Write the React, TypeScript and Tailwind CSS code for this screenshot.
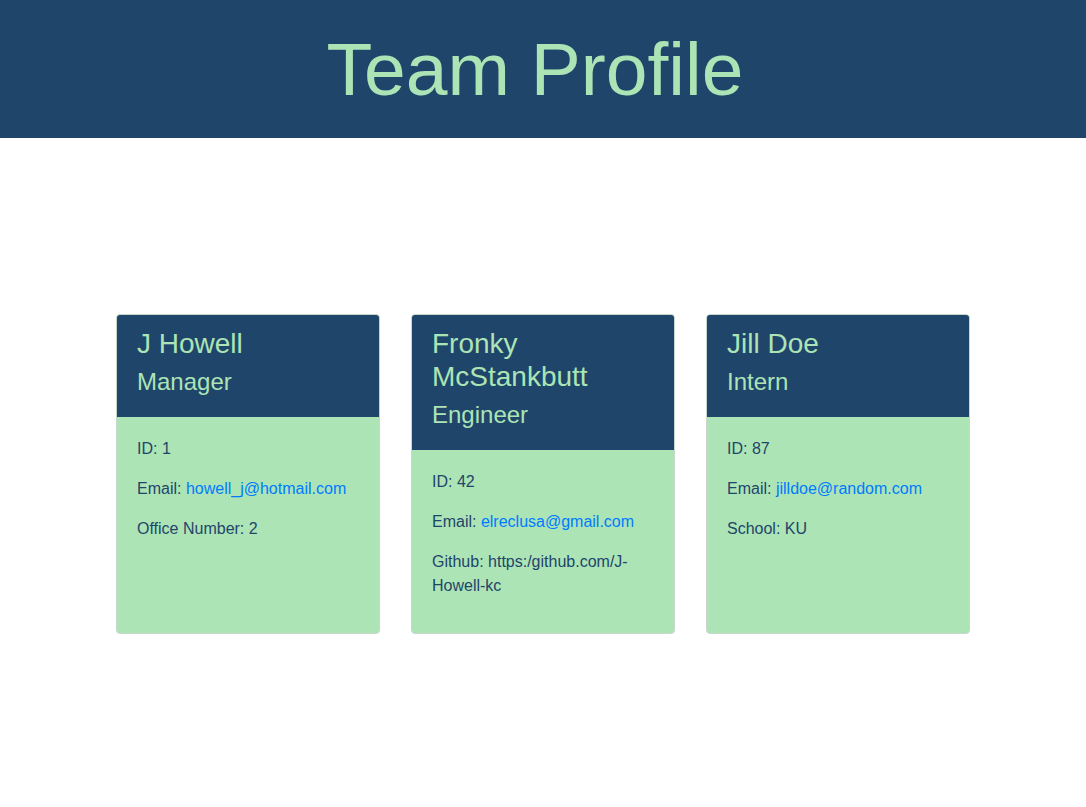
const team = [
  {
    name: "J Howell",
    role: "Manager",
    id: 1,
    email: "howell_j@hotmail.com",
    extraLabel: "Office Number",
    extra: "2",
  },
  {
    name: "Fronky McStankbutt",
    role: "Engineer",
    id: 42,
    email: "elreclusa@gmail.com",
    extraLabel: "Github",
    extra: "https:/github.com/J-Howell-kc",
  },
  {
    name: "Jill Doe",
    role: "Intern",
    id: 87,
    email: "jilldoe@random.com",
    extraLabel: "School",
    extra: "KU",
  },
];

const App = () => {
  return (
    <div className="min-h-screen bg-white font-['Liberation_Sans',Arial,sans-serif]">
      <header className="flex h-[138px] items-center justify-center bg-[#1f456b] pr-[16px]">
        <h1 className="text-[75px] leading-[1.2] text-[#ace4b5]">Team Profile</h1>
      </header>

      <main className="mt-[176px] flex justify-center gap-[31px]">
        {team.map((member) => (
          <div
            key={member.id}
            className="flex w-[264px] flex-col overflow-hidden rounded-[4px] border border-[#c9d6cc] bg-[#ace4b5]"
          >
            <div className="bg-[#1f456b] px-5 pt-3 pb-3 text-[#ace4b5]">
              <h3 className="mb-2 text-[28px] leading-[1.185]">{member.name}</h3>
              <h4 className="mb-2 text-[24px] leading-[1.2]">{member.role}</h4>
            </div>
            <div className="flex-1 px-5 pt-5 pb-[19px] text-base leading-6 text-[#1f456b]">
              <p className="mb-4">ID: {member.id}</p>
              <p className="mb-4">
                Email: <a href={`mailto:${member.email}`} className="text-[#007bff]">{member.email}</a>
              </p>
              <p className="mb-4">
                {member.extraLabel}: {member.extra}
              </p>
            </div>
          </div>
        ))}
      </main>
    </div>
  );
};

export default App;
